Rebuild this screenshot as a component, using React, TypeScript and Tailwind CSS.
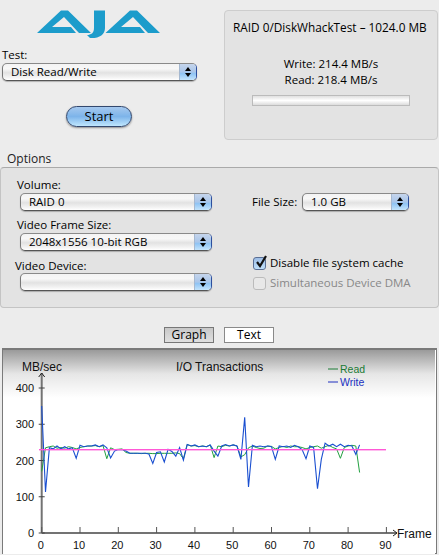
const font = { fontFamily: '"Open Sans", "DejaVu Sans", sans-serif' };

function Select({ value, className }: { value: string; className: string }) {
  return (
    <div className={`flex h-[18px] rounded-[5px] border border-[#777] border-t-[#8a8a8a] border-r-[#2d4f9e] border-b-[#555] bg-[linear-gradient(to_bottom,#f4f4f4_0%,#f8f8f8_30%,#e2e2e2_55%,#f4f4f4_85%,#ffffff_100%)] shadow-[0_1px_1px_rgba(0,0,0,0.25)] ${className}`}>
      <div className="flex-1 pl-2 text-[11.5px] leading-[16px] text-black whitespace-nowrap">{value}</div>
      <div className="flex w-[17px] flex-col items-center justify-center gap-[2px] rounded-r-[4px] border-l border-[#a5b8d0] bg-[linear-gradient(to_bottom,#c5d5ec_0%,#a9c6ea_50%,#8fc4f4_60%,#c4e4fc_100%)]">
        <div className="h-0 w-0 border-x-[3px] border-b-[4px] border-x-transparent border-b-black" />
        <div className="h-0 w-0 border-x-[3px] border-t-[4px] border-x-transparent border-t-black" />
      </div>
    </div>
  );
}

function Logo() {
  return (
    <svg width="125" height="29" viewBox="0 0 125 29" className="ml-[37px]">
      <g fill="#1c9ccb">
        <path d="M0 23 L24 0.5 H31 L54 23 H42 L27 7 L15 17 H34 L39 23 Z" />
        <path d="M57 0.5 H68 V18 C68 25 62 28.5 53 28 L50 25 C54 25 57 23 57 18 Z" />
        <path d="M68.5 23 L93 0.5 H100 L123 23 H111 L96 7 L84 17 H103 L108 23 Z" />
      </g>
    </svg>
  );
}

const write: number[] = [350,113,235,232,240,232,238,232,235,206,242,238,240,240,243,238,243,235,207,226,230,230,226,220,220,220,220,220,218,192,222,224,196,231,225,212,236,201,244,240,243,238,240,238,243,226,212,240,244,240,243,240,203,319,127,242,238,240,238,240,238,203,240,238,240,236,242,238,230,205,240,236,122,203,248,240,245,238,245,238,242,240,217,243];
const read: number[] = [170,235,238,240,234,236,234,238,236,232,236,238,240,240,241,238,241,205,235,230,231,232,222,220,220,220,219,220,220,219,219,220,220,220,220,221,219,205,244,240,241,238,240,238,243,208,240,238,242,240,243,240,210,216,235,240,236,233,234,240,239,232,236,239,236,240,238,238,236,232,236,238,240,234,238,242,236,232,206,236,240,242,240,167];
const xAt = (f: number) => 38.7 + f * 3.83;
const yAt = (v: number) => 183 - v * 0.3625;
const toPts = (a: number[]) => a.map((v, i) => `${xAt(i).toFixed(1)},${yAt(v).toFixed(1)}`).join(" ");
const yTicks = [0, 100, 200, 300, 400];
const xTicks = [0, 10, 20, 30, 40, 50, 60, 70, 80, 90];

function Chart() {
  const labelFont = '"Liberation Sans", Arial, sans-serif';
  return (
    <svg width="432" height="204" viewBox="0 0 432 204" className="block">
      <defs>
        <linearGradient id="bg" x1="0" y1="0" x2="0" y2="1">
          <stop offset="0" stopColor="#9a9a9a" />
          <stop offset="0.5" stopColor="#e6e6e6" />
          <stop offset="1" stopColor="#ffffff" />
        </linearGradient>
      </defs>
      <rect x="0" y="0" width="432" height="48" fill="url(#bg)" />
      <rect x="0" y="48" width="432" height="156" fill="#fff" />
      <g fontFamily={labelFont} fontSize="12" fill="#111">
        <text x="19" y="20.5" fontSize="12">MB/sec</text>
        <text x="173" y="20.5" fontSize="12">I/O Transactions</text>
        <text x="337" y="23" fill="#1a7a34" fontSize="10.5">Read</text>
        <text x="337" y="36" fill="#2030c0" fontSize="10.5">Write</text>
        <text x="394" y="188" fontSize="12">Frame</text>
        {yTicks.map((v) => (
          <text key={v} x="31" y={yAt(v) + 4} textAnchor="end" fontSize="11">{v}</text>
        ))}
        {xTicks.map((f) => (
          <text key={f} x={xAt(f) - 1} y="199" textAnchor="middle" fontSize="11">{f}</text>
        ))}
      </g>
      <line x1="325" y1="19" x2="335" y2="19" stroke="#1a7a34" />
      <line x1="325" y1="32" x2="335" y2="32" stroke="#2030c0" />
      <line x1="38.7" y1="23" x2="38.7" y2="183" stroke="#737373" strokeWidth="2" />
      <line x1="38.7" y1="183" x2="394" y2="183" stroke="#737373" strokeWidth="2" />
      <path d="M35.7 27 L38.7 23 L41.7 27 M390 180 L394 183 L390 186" fill="none" stroke="#222" strokeWidth="1" />
      {yTicks.map((v) => (
        <line key={v} x1="35.7" x2="41.7" y1={yAt(v)} y2={yAt(v)} stroke="#444" />
      ))}
      {xTicks.map((f) => (
        <line key={f} x1={xAt(f)} x2={xAt(f)} y1="177" y2="183" stroke="#555" />
      ))}
      <polyline points={toPts(read)} fill="none" stroke="#22a040" strokeWidth="1" />
      <polyline points={toPts(write)} fill="none" stroke="#1a4fd0" strokeWidth="1.1" />
      <rect x="36" y="99" width="347" height="1.4" fill="#ff58d6" />
    </svg>
  );
}

function Check({ on }: { on: boolean }) {
  return on ? (
    <div className="relative h-[13px] w-[13px] rounded-[3px] border border-[#5a6f95] bg-gradient-to-b from-[#9dbde6] to-[#bfe0fb]">
      <svg width="15" height="15" viewBox="0 0 15 15" className="absolute left-[0px] top-[-4px]">
        <path d="M3 8 L6 12 L12 2" fill="none" stroke="#111" strokeWidth="2.2" />
      </svg>
    </div>
  ) : (
    <div className="h-[13px] w-[13px] rounded-[3px] border border-[#bbb] bg-[#e8e8e8]" />
  );
}

export default function App() {
  return (
    <div style={font} className="relative flex h-[555px] w-[439px] flex-col overflow-hidden bg-[#ececec] text-[11.5px] text-black">
      <div className="flex h-[152px]">
        <div className="w-[224px] pt-[10px]">
          <Logo />
          <div className="ml-[2px] mt-[8px] mb-[1px] leading-[15px]">Test:</div>
          <Select value="Disk Read/Write" className="ml-[2px] w-[195px]" />
          <div className="ml-[66px] mt-[25px] flex h-[21px] w-[66px] items-center justify-center rounded-full border border-[#33486e] bg-gradient-to-b from-[#a5c8ee] via-[#7db4ea] to-[#bfe6fd] text-[13px] shadow-[0_1px_2px_rgba(0,0,0,0.4)]">Start</div>
        </div>
        <div className="mt-[10px] mr-px flex h-[130px] w-[214px] flex-col items-center rounded-[4px] border border-[#cdcdcd] bg-[#e3e3e3] pt-[9px]">
          <div className="self-start pl-2 text-[11.8px] leading-[15px] whitespace-nowrap">RAID 0/DiskWhackTest – 1024.0 MB</div>
          <div className="mt-[21px] leading-[16px]">Write: 214.4 MB/s</div>
          <div className="leading-[16px]">Read: 218.4 MB/s</div>
          <div className="mt-[7px] h-[11px] w-[158px] border border-[#bbb] bg-gradient-to-b from-[#e0e0e0] via-white to-[#dcdcdc]" />
        </div>
      </div>
      <div className="ml-[7px] h-[15px] text-[12px] leading-[13px] text-[#222]">Options</div>
      <div className="flex h-[141px] w-[439px] rounded-[4px] border border-[#c4c4c4] border-t-[#aaa] bg-[#e3e3e3]">
        <div className="w-[222px] pt-[9px]">
          <div className="ml-[16px] leading-[15px]">Volume:</div>
          <Select value="RAID 0" className="ml-[19px] mt-[1px] w-[192px]" />
          <div className="ml-[16px] mt-[6px] leading-[16px]">Video Frame Size:</div>
          <Select value="2048x1556 10-bit RGB" className="ml-[19px] w-[192px]" />
          <div className="ml-[14px] mt-[7px] mb-[-1px] leading-[16px]">Video Device:</div>
          <Select value="" className="ml-[19px] w-[192px]" />
        </div>
        <div className="pt-[25px]">
          <div className="flex items-center">
            <div className="ml-[29px] w-[50px] whitespace-nowrap">File Size:</div>
            <Select value="1.0 GB" className="w-[107px]" />
          </div>
          <div className="ml-[30px] mt-[44px] flex items-center gap-[4px] leading-[16px]"><Check on />Disable file system cache</div>
          <div className="ml-[30px] mt-[4px] flex items-center gap-[4px] leading-[16px] text-[#888]"><Check on={false} />Simultaneous Device DMA</div>
        </div>
      </div>
      <div className="flex h-[40px] items-start pt-[19px] pl-[164px]">
        <div className="flex h-[16px] w-[50px] items-center justify-center border border-[#777] bg-gradient-to-b from-[#c8c8c8] to-[#e0e0e0] text-[12px]">Graph</div>
        <div className="ml-[10px] flex h-[16px] w-[50px] items-center justify-center border border-[#8a8a8a] bg-white text-[12px]">Text</div>
      </div>
      <div className="ml-[2px] mr-[2px] h-[206px] border border-[#7a7a7a] border-t-2 bg-white">
        <Chart />
      </div>
    </div>
  );
}
